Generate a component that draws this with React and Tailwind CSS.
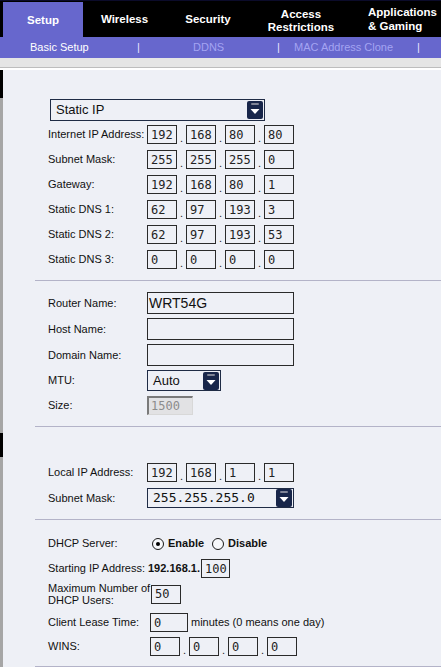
import React from 'react';

const sans = "font-['Liberation_Sans',Arial,sans-serif]";
const mono = "font-['DejaVu_Sans_Mono',monospace]";

const Arrow = () => (
  <svg width="16" height="18" viewBox="0 0 16 18" className="shrink-0">
    <rect x="0" y="0" width="16" height="18" rx="2" fill="#18264a" />
    <rect x="4" y="2" width="8" height="2" rx="1" fill="#7f8496" />
    <path d="M3.5 8h9L8 13z" fill="#ffffff" />
  </svg>
);

const Box = ({ v, w = 'w-[30px]' }) => (
  <div className={`${w} h-full border border-[#2a2a2a] ${mono} text-[12px] text-[#222] pl-[3px] flex items-center`}>
    {v}
  </div>
);

const Dot = () => (
  <span className="w-[9px] h-full flex items-end justify-center text-[11px] leading-[11px] text-[#222]">.</span>
);

const IpFields = ({ values }) => (
  <div className="flex h-full">
    {values.map((v, i) => (
      <React.Fragment key={i}>
        {i > 0 && <Dot />}
        <Box v={v} />
      </React.Fragment>
    ))}
  </div>
);

const Row = ({ label, h = 'h-[19px]', lw = 'w-[99px]', children }) => (
  <div className={`flex items-center ${h}`}>
    <div className={`${lw} shrink-0 text-[11px] leading-[12px] text-[#111] -mt-[1px]`}>{label}</div>
    <div className="flex items-center h-full">{children}</div>
  </div>
);

const Radio = ({ checked }) => (
  <span className="w-[12px] h-[12px] rounded-full border border-[#1a1a1a] bg-[#f7f8fb] flex items-center justify-center">
    {checked && <span className="w-[4px] h-[4px] rounded-full bg-black" />}
  </span>
);

const Line = () => <div className="ml-[32px] h-[1px] bg-[#b3b3c8]" />;

export default function App() {
  const dns = [
    ['Internet IP Address:', ['192', '168', '80', '80']],
    ['Subnet Mask:', ['255', '255', '255', '0']],
    ['Gateway:', ['192', '168', '80', '1']],
    ['Static DNS 1:', ['62', '97', '193', '3']],
    ['Static DNS 2:', ['62', '97', '193', '53']],
    ['Static DNS 3:', ['0', '0', '0', '0']],
  ];

  return (
    <div className={`w-[441px] h-[667px] overflow-hidden bg-[#eef0f6] ${sans}`}>
      {/* top tabs */}
      <div className="flex h-[37px] bg-black text-white font-bold text-[11.5px] leading-[13px] border-t border-[#0b0b2a]">
        <div className="w-[3px]" />
        <div className="w-[80px] mt-[1px] bg-[#6767cd] flex items-center justify-center pt-[1px]">Setup</div>
        <div className="w-[83px] flex items-center justify-center pt-[1px]">Wireless</div>
        <div className="w-[84px] flex items-center justify-center pt-[1px]">Security</div>
        <div className="w-[102px] flex flex-col items-center justify-center text-center pt-[4px]">
          <span>Access</span>
          <span>Restrictions</span>
        </div>
        <div className="flex-1 pl-[16px] flex flex-col justify-center leading-[14px]">
          <span>Applications</span>
          <span>&amp; Gaming</span>
        </div>
      </div>

      {/* sub menu */}
      <div className="flex items-center h-[21px] bg-[#6767cd] text-[11px] text-[#a4a4f2]">
        <div className="w-[136px] pl-[30px] text-white">Basic Setup</div>
        <div className="w-[5px] text-center text-[#e6e6ff]">|</div>
        <div className="w-[135px] pl-[52px]">DDNS</div>
        <div className="w-[5px] text-center text-[#e6e6ff]">|</div>
        <div className="w-[135px] pl-[13px]">MAC Address Clone</div>
        <div className="w-[5px] text-center text-[#e6e6ff]">|</div>
      </div>

      <div className="h-[9px] bg-[#e5e5e5]" />
      <div className="h-[1px] bg-[#bdbdbd]" />
      <div className="h-[2px] bg-white" />

      <div className="flex">
        {/* left edge */}
        <div className="w-[3px] flex flex-col bg-[#a6a6a6]">
          <div className="h-[28px] bg-black" />
          <div className="h-[335px]" />
          <div className="h-[24px] bg-black" />
        </div>

        <div className="flex-1 flex flex-col">
          {/* WAN type */}
          <div className="pl-[47px] pt-[29px]">
            <div className="w-[215px] h-[22px] border border-[#1f2b45] flex items-center justify-between pl-[5px] pr-[1px] text-[13px] text-[#111]">
              <span>Static IP</span>
              <Arrow />
            </div>
          </div>

          <div className="pl-[45px] mt-[4px] flex flex-col gap-[6px]">
            {dns.map(([label, values]) => (
              <Row key={label} label={label}>
                <IpFields values={values} />
              </Row>
            ))}
          </div>

          <div className="mt-[11px]">
            <Line />
          </div>

          {/* optional settings */}
          <div className="pl-[45px] mt-[11px] flex flex-col">
            <Row label="Router Name:" h="h-[22px]">
              <div className="w-[147px] h-full border border-[#2a2a2a] text-[14px] text-[#111] pl-[1px] flex items-center">WRT54G</div>
            </Row>
            <div className="mt-[4px]">
              <Row label="Host Name:" h="h-[22px]">
                <div className="w-[147px] h-full border border-[#2a2a2a]" />
              </Row>
            </div>
            <div className="mt-[4px]">
              <Row label="Domain Name:" h="h-[22px]">
                <div className="w-[147px] h-full border border-[#2a2a2a]" />
              </Row>
            </div>
            <div className="mt-[4px]">
              <Row label="MTU:" h="h-[21px]">
                <div className="w-[74px] h-full border border-[#1f2b45] flex items-center justify-between pl-[5px] pr-[1px] text-[13px] text-[#111]">
                  <span>Auto</span>
                  <Arrow />
                </div>
              </Row>
            </div>
            <div className="mt-[5px]">
              <Row label="Size:" h="h-[19px]">
                <div className={`w-[46px] h-full bg-[#e2e2e4] border-t-2 border-l-2 border-t-[#7a7a7a] border-l-[#7a7a7a] border-b border-r border-b-[#d8d8d8] border-r-[#d8d8d8] ${mono} text-[12px] text-[#8c8c8c] pl-[2px] flex items-center`}>
                  1500
                </div>
              </Row>
            </div>
          </div>

          <div className="mt-[11px]">
            <Line />
          </div>

          {/* LAN */}
          <div className="pl-[45px] mt-[36px] flex flex-col">
            <Row label="Local IP Address:">
              <IpFields values={['192', '168', '1', '1']} />
            </Row>
            <div className="mt-[6px]">
              <Row label="Subnet Mask:" h="h-[20px]">
                <div className={`w-[147px] h-full border border-[#1f2b45] flex items-center justify-between pl-[5px] pr-[1px] ${mono} text-[13px] text-[#111]`}>
                  <span>255.255.255.0</span>
                  <Arrow />
                </div>
              </Row>
            </div>
          </div>

          <div className="mt-[11px]">
            <Line />
          </div>

          {/* DHCP */}
          <div className="pl-[45px] mt-[14px] flex flex-col">
            <Row label="DHCP Server:" lw="w-[104px]">
              <div className="flex items-center gap-[4px] text-[11px] font-bold text-[#111]">
                <Radio checked />
                <span className="mr-[4px]">Enable</span>
                <Radio />
                <span>Disable</span>
              </div>
            </Row>
            <div className="mt-[6px]">
              <Row label="Starting IP Address:" lw="w-[100px]">
                <span className="text-[11px] font-bold text-[#111] mr-[1px]">192.168.1.</span>
                <Box v="100" w="w-[29px]" />
              </Row>
            </div>
            <div className="mt-[4px]">
              <Row label={<>Maximum Number of<br />DHCP Users:</>} h="h-[24px]" lw="w-[103px]">
                <div className="h-[19px] flex">
                  <Box v="50" />
                </div>
              </Row>
            </div>
            <div className="mt-[7px]">
              <Row label="Client Lease Time:" lw="w-[102px]">
                <Box v="0" w="w-[38px]" />
                <span className="ml-[3px] text-[11px] text-[#111]">minutes (0 means one day)</span>
              </Row>
            </div>
            <div className="mt-[5px]">
              <Row label="WINS:" lw="w-[102px]">
                <IpFields values={['0', '0', '0', '0']} />
              </Row>
            </div>
          </div>

          <div className="mt-[10px]">
            <Line />
          </div>
        </div>
      </div>
    </div>
  );
}
